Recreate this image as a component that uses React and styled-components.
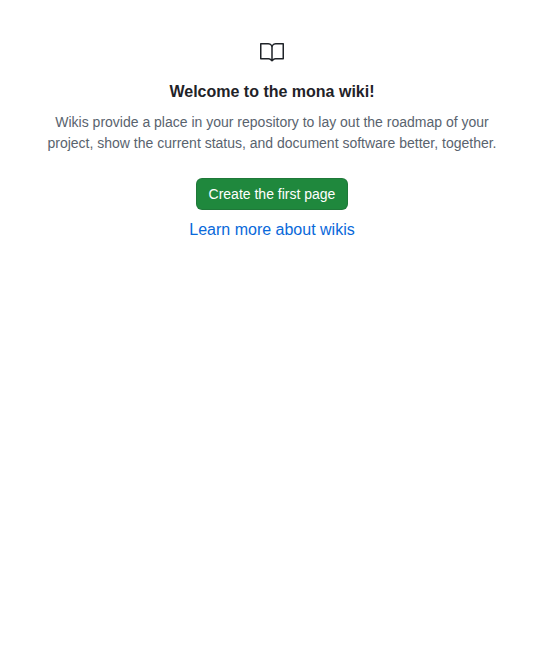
import React from "react";
import styled, { createGlobalStyle } from "styled-components";

const GlobalStyle = createGlobalStyle`
  *, *::before, *::after { box-sizing: border-box; }
  body {
    margin: 0;
    background: #ffffff;
    color: #1f2328;
    font-family: "Liberation Sans", Arial, sans-serif;
    font-size: 14px;
    line-height: 21px;
  }
`;

const Blankslate = styled.main`
  display: flex;
  flex-direction: column;
  align-items: center;
  padding: 32px;
  text-align: center;
`;

const Visual = styled.div`
  display: flex;
  padding: 8px 0;
  margin-bottom: 8px;
`;

const Heading = styled.h1`
  margin: 0 0 8px;
  font-size: 16px;
  font-weight: 600;
  line-height: 24px;
`;

const Description = styled.p`
  margin: 0;
  max-width: 480px;
  color: #59636e;
`;

const Actions = styled.div`
  display: flex;
  flex-direction: column;
  align-items: center;
  gap: 8px;
  margin-top: 24px;
`;

const PrimaryButton = styled.button`
  height: 32px;
  padding: 0 12px;
  border: 1px solid rgba(31, 35, 40, 0.15);
  border-radius: 6px;
  background: #1f883d;
  color: #ffffff;
  font: inherit;
  font-weight: 500;
  cursor: pointer;

  &:hover {
    background: #1c8139;
  }
`;

const SecondaryLink = styled.a`
  color: #0969da;
  font-size: 16px;
  line-height: 24px;
  text-decoration: none;

  &:hover {
    text-decoration: underline;
  }
`;

const BookIcon = () => (
  <svg width="24" height="24" viewBox="0 0 24 24" fill="currentColor" aria-hidden="true">
    <path d="M0 3.75A.75.75 0 0 1 .75 3h7.497c1.566 0 2.945.8 3.751 2.014A4.495 4.495 0 0 1 15.75 3h7.5a.75.75 0 0 1 .75.75v15.063a.752.752 0 0 1-.755.75l-7.682-.052a3 3 0 0 0-2.142.878l-.89.891a.75.75 0 0 1-1.061 0l-.902-.901a2.996 2.996 0 0 0-2.121-.879H.75a.75.75 0 0 1-.75-.75Zm12.75 15.232a4.503 4.503 0 0 1 2.823-.971l6.927.047V4.5h-6.75a3 3 0 0 0-3 3ZM11.247 7.497a3 3 0 0 0-3-2.997H1.5V18h6.947c1.018 0 2.006.346 2.803.98Z" />
  </svg>
);

export default function App() {
  return (
    <>
      <GlobalStyle />
      <Blankslate>
        <Visual>
          <BookIcon />
        </Visual>
        <Heading>Welcome to the mona wiki!</Heading>
        <Description>
          Wikis provide a place in your repository to lay out the roadmap of your
          project, show the current status, and document software better, together.
        </Description>
        <Actions>
          <PrimaryButton type="button">Create the first page</PrimaryButton>
          <SecondaryLink href="#about-wikis">Learn more about wikis</SecondaryLink>
        </Actions>
      </Blankslate>
    </>
  );
}
